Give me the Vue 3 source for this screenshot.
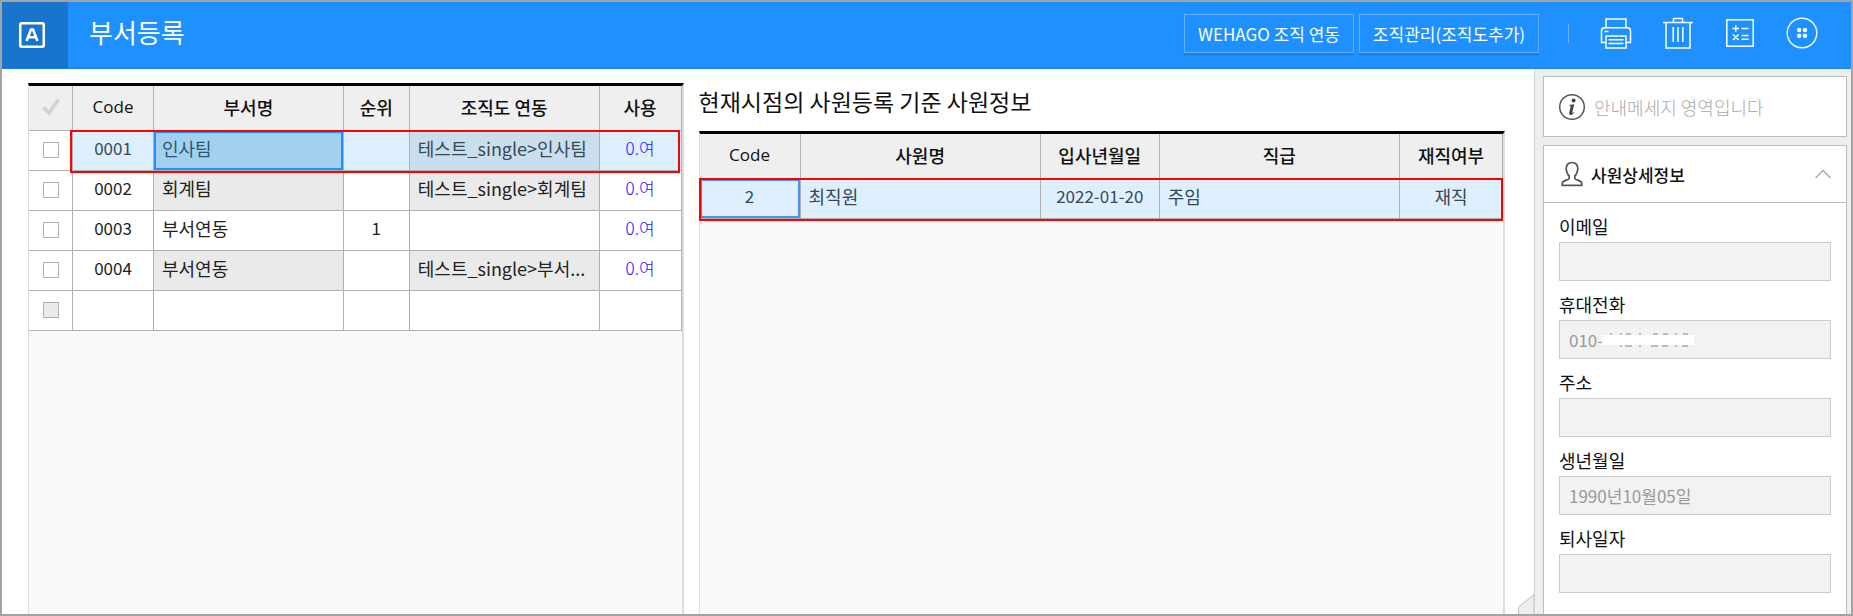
<template>
    <div class="app-frame">
        <header class="top-bar">
            <div class="logo-box">
                <svg class="logo-icon" viewBox="0 0 26 26" fill="none" stroke="#fff">
                    <rect x="1.25" y="1.25" width="23.5" height="23.5" rx="1.5" stroke-width="2.5" />
                    <path d="M7.5 19 L12 7.5 H14 L18.5 19 M9 15.3 H17" stroke-width="2.6" />
                </svg>
            </div>
            <h1 class="page-title">부서등록</h1>

            <div class="top-actions">
                <button type="button" class="text-button">WEHAGO 조직 연동</button>
                <button type="button" class="text-button wide">조직관리(조직도추가)</button>
            </div>
            <span class="divider"></span>
            <div class="icon-actions">
                <button type="button" class="icon-button" aria-label="인쇄">
                    <svg viewBox="0 0 32 32" fill="none" stroke="#fff" stroke-width="1.5">
                        <path d="M6 10.5 V2 H26 V10.5" />
                        <path d="M6 25.5 H1.5 V14 Q1.5 10.7 4.5 10.7 H27.5 Q30.5 10.7 30.5 14 V25.5 H26" />
                        <path d="M6 19 H26 V31 H6 Z M8.5 22.8 H23.5 M8.5 26.5 H23.5 M4.5 14.5 H8.5" />
                    </svg>
                </button>
                <button type="button" class="icon-button" aria-label="삭제">
                    <svg viewBox="0 0 32 32" fill="none" stroke="#fff" stroke-width="1.5">
                        <path d="M1 5.5 H31 M11.5 5 V1.5 H20.5 V5 M4 5.5 V31 H28 V5.5 M11.2 10 V25 M16 10 V25 M20.8 10 V25" />
                    </svg>
                </button>
                <button type="button" class="icon-button" aria-label="계산기">
                    <svg viewBox="0 0 32 32" fill="none" stroke="#fff" stroke-width="1.5">
                        <rect x="2.8" y="2.8" width="26.4" height="26.4" />
                        <path d="M8.5 11.5 H15 M11.8 8.2 V14.8 M17.5 11.5 H24.5 M9 17.5 L14.5 23 M14.5 17.5 L9 23 M17.5 18.5 H24.5 M17.5 22.3 H24.5" />
                    </svg>
                </button>
                <button type="button" class="icon-button" aria-label="더보기">
                    <svg viewBox="0 0 32 32" fill="none" stroke="#fff" stroke-width="1.4">
                        <circle cx="16" cy="16" r="14.8" />
                        <g fill="#fff" stroke="none">
                            <circle cx="13.2" cy="13" r="2.2" />
                            <circle cx="19" cy="13" r="2.2" />
                            <circle cx="13.2" cy="18.8" r="2.2" />
                            <circle cx="19" cy="18.8" r="2.2" />
                        </g>
                    </svg>
                </button>
            </div>
        </header>

        <div class="content">
            <main class="workspace">
                <section class="grid-pane dept-pane">
                    <table class="grid">
                        <colgroup>
                            <col class="col-check" />
                            <col class="col-code" />
                            <col />
                            <col class="col-order" />
                            <col />
                            <col class="col-use" />
                        </colgroup>
                        <thead>
                            <tr>
                                <th>
                                    <svg class="check-mark" viewBox="0 0 18 18" fill="none" stroke="#d0d0d0" stroke-width="3.4">
                                        <path d="M1.5 9.5 L7 15 L16.5 1.5" />
                                    </svg>
                                </th>
                                <th class="latin">Code</th>
                                <th>부서명</th>
                                <th>순위</th>
                                <th>조직도 연동</th>
                                <th>사용</th>
                            </tr>
                        </thead>
                        <tbody>
                            <tr v-for="(dept, index) in departments" :key="index" :class="{ selected: dept.selected }">
                                <td class="center">
                                    <input type="checkbox" class="row-check" :disabled="!dept.code" :aria-label="`${dept.code} 선택`" />
                                    <span v-if="dept.selected" class="row-mark"></span>
                                </td>
                                <td class="center latin">{{ dept.code }}</td>
                                <td :class="{ locked: dept.linked, focused: dept.selected }">{{ dept.name }}</td>
                                <td class="center latin">{{ dept.order }}</td>
                                <td :class="{ locked: dept.linked }">{{ dept.link }}</td>
                                <td class="center use">{{ dept.use }}</td>
                            </tr>
                        </tbody>
                    </table>
                </section>

                <section class="employee-area">
                    <h2 class="section-title">현재시점의 사원등록 기준 사원정보</h2>
                    <div class="grid-pane employee-pane">
                        <table class="grid">
                            <colgroup>
                                <col class="col-id" />
                                <col />
                                <col class="col-date" />
                                <col />
                                <col class="col-status" />
                            </colgroup>
                            <thead>
                                <tr>
                                    <th class="latin">Code</th>
                                    <th>사원명</th>
                                    <th>입사년월일</th>
                                    <th>직급</th>
                                    <th>재직여부</th>
                                </tr>
                            </thead>
                            <tbody>
                                <tr v-for="employee in employees" :key="employee.code" class="selected">
                                    <td class="center latin outlined">
                                        {{ employee.code }}
                                        <span class="row-mark"></span>
                                    </td>
                                    <td>{{ employee.name }}</td>
                                    <td class="center latin">{{ employee.joined }}</td>
                                    <td>{{ employee.rank }}</td>
                                    <td class="center">{{ employee.status }}</td>
                                </tr>
                            </tbody>
                        </table>
                    </div>
                </section>

                <svg class="corner-tab" viewBox="0 0 16 20" fill="#eee" stroke="#c0c0c0">
                    <path d="M0.5 21 V13 L16 0.5 V21" />
                </svg>
            </main>

            <aside class="side-panel">
                <div class="notice">
                    <svg class="info-icon" viewBox="0 0 28 28">
                        <circle cx="14" cy="14" r="12.3" fill="none" stroke="#555" stroke-width="1.5" />
                        <circle cx="15.6" cy="7.6" r="2" fill="#444" />
                        <path d="M10.8 12 L16.2 11.2 L14.2 19.5 Q14.1 20.8 16.8 18.6 Q15.2 22 12.4 22 Q10.7 21.8 11.2 19.6 L12.8 13.3 Z" fill="#444" />
                    </svg>
                    <span>안내메세지 영역입니다</span>
                </div>

                <section class="detail-card">
                    <button type="button" class="detail-header" @click="detailOpen = !detailOpen">
                        <svg class="user-icon" viewBox="0 0 22 26" fill="none" stroke="#555" stroke-width="1.7">
                            <path d="M11 1.5 C7 1.5 5 4.3 5.2 8 C5.4 11 6.5 13.5 8.2 15 V17.5 C7.5 19.5 1.2 19 1.2 22.5 V24.4 H20.8 V22.5 C20.8 19 14.5 19.5 13.8 17.5 V15 C15.5 13.5 16.6 11 16.8 8 C17 4.3 15 1.5 11 1.5 Z" />
                        </svg>
                        <span class="detail-title">사원상세정보</span>
                        <svg class="chevron" viewBox="0 0 16 10" fill="none" stroke="#aaa" stroke-width="1.5">
                            <path d="M0.5 9 L8 1.5 L15.5 9" />
                        </svg>
                    </button>
                    <div v-if="detailOpen" class="detail-body">
                        <div v-for="field in fields" :key="field.id" class="field">
                            <label :for="field.id">{{ field.label }}</label>
                            <div class="field-box">
                                <input :id="field.id" type="text" :value="field.value" readonly />
                                <svg v-if="field.masked" class="mask" viewBox="0 0 92 14">
                                    <rect x="0" y="2" width="92" height="10" fill="#fff" />
                                    <path d="M8 1 H10 M18 1 H20 M24 1 H29 M37 1 H39 M51 1 H56 M61 1 H66 M73 1 H75 M81 1 H86 M18 13 H20 M23 13 H30 M37 13 H39 M49 13 H56 M60 13 H66 M73 13 H75 M80 13 H86" stroke="#aaa" stroke-width="1.4" />
                                </svg>
                            </div>
                        </div>
                    </div>
                </section>
            </aside>
        </div>
    </div>
</template>

<script setup>
import { ref } from 'vue';

const detailOpen = ref(true);

const departments = [
    { code: '0001', name: '인사팀', order: '', link: '테스트_single>인사팀', use: '0.여', linked: true, selected: true },
    { code: '0002', name: '회계팀', order: '', link: '테스트_single>회계팀', use: '0.여', linked: true },
    { code: '0003', name: '부서연동', order: '1', link: '', use: '0.여', linked: false },
    { code: '0004', name: '부서연동', order: '', link: '테스트_single>부서...', use: '0.여', linked: true },
    { code: '', name: '', order: '', link: '', use: '', linked: false },
];

const employees = [
    { code: '2', name: '최직원', joined: '2022-01-20', rank: '주임', status: '재직' },
];

const fields = [
    { id: 'email', label: '이메일', value: '' },
    { id: 'mobile', label: '휴대전화', value: '010-', masked: true },
    { id: 'address', label: '주소', value: '' },
    { id: 'birth', label: '생년월일', value: '1990년10월05일' },
    { id: 'leave', label: '퇴사일자', value: '' },
];
</script>

<style>
body {
    margin: 0;
}
</style>

<style scoped>
.app-frame {
    box-sizing: border-box;
    display: flex;
    flex-direction: column;
    height: 100vh;
    border: 2px solid #a3a3a3;
    background: #fff;
    font-family: "Noto Sans CJK KR", "Noto Sans", sans-serif;
    font-size: 18px;
    color: #222;
    overflow: hidden;
}

.app-frame * {
    box-sizing: border-box;
}

button {
    font-family: inherit;
    cursor: pointer;
}

.top-bar {
    flex: none;
    display: flex;
    align-items: center;
    height: 67px;
    padding-right: 33px;
    padding-bottom: 4px;
    background: #1e90ff;
    border-bottom: 1px solid #1a80e4;
}

.logo-box {
    display: flex;
    align-items: center;
    align-self: flex-start;
    width: 66px;
    height: 66px;
    padding-left: 17px;
    background: #1874cd;
}

.logo-icon {
    width: 26px;
    height: 26px;
}

.page-title {
    flex: 1;
    margin: 0;
    padding-left: 21px;
    padding-bottom: 2px;
    font-size: 26px;
    line-height: 36px;
    font-weight: 400;
    color: #fff;
}

.top-actions {
    display: flex;
    gap: 5px;
}

.text-button {
    width: 170px;
    height: 39px;
    padding: 0;
    border: 1px solid #62b1ff;
    background: transparent;
    box-shadow: 0 2px 1px rgba(0, 60, 130, 0.2);
    color: #fff;
    font-size: 17px;
    font-weight: 400;
    white-space: nowrap;
}

.text-button.wide {
    width: 180px;
}

.divider {
    width: 1px;
    height: 19px;
    margin: 0 31px 0 29px;
    background: #69b5ff;
}

.icon-actions {
    display: flex;
    gap: 30px;
}

.icon-button {
    width: 32px;
    height: 32px;
    padding: 0;
    border: 0;
    background: transparent;
}

.icon-button svg {
    display: block;
    width: 32px;
    height: 32px;
}

.content {
    flex: 1;
    display: flex;
    min-height: 0;
}

.workspace {
    position: relative;
    flex: 1;
    display: flex;
    gap: 15px;
    min-width: 0;
    padding: 14px 29px 0 26px;
}

.grid-pane {
    background: #fafafa;
    border-top: 3px solid #000;
    border-left: 1px solid #ddd;
    border-right: 2px solid #ddd;
}

.dept-pane {
    flex: 653 1 0;
    min-width: 0;
}

.employee-area {
    flex: 807 1 0;
    display: flex;
    flex-direction: column;
    min-width: 0;
}

.section-title {
    margin: 0;
    height: 48px;
    font-size: 23px;
    line-height: 36px;
    font-weight: 400;
    color: #111;
    white-space: nowrap;
}

.employee-pane {
    flex: 1;
}

.grid {
    width: 100%;
    table-layout: fixed;
    border-collapse: separate;
    border-spacing: 0;
}

.grid th,
.grid td {
    padding: 0 8px;
    border-right: 1px solid #b0b0b0;
    border-bottom: 1px solid #b0b0b0;
    line-height: 26px;
    white-space: nowrap;
    overflow: hidden;
    text-overflow: ellipsis;
}

.grid th {
    height: 45px;
    padding: 0 0 3px;
    background: #efefef;
    font-weight: 500;
    color: #111;
}

.grid td {
    height: 40px;
    padding-bottom: 5px;
    background: #fff;
    font-weight: 400;
}

.grid .latin {
    font-size: 17px;
}

.grid th.latin {
    font-family: "Open Sans", sans-serif;
    font-weight: 500;
}

.grid td.center {
    padding-left: 0;
    padding-right: 0;
    text-align: center;
}

.grid td.locked {
    background: #eaeaea;
}

.grid td.use {
    color: #1414ff;
    font-size: 17px;
    font-weight: 300;
}

.grid tr.selected {
    position: relative;
}

.grid tr.selected td {
    background: #def0ff;
    color: #34495a;
}

.dept-pane tr.selected td:first-child {
    background: #fff;
}

.grid tr.selected td.locked {
    background: #cadeee;
}

.grid tr.selected td.focused {
    background: #a4d0f0;
    box-shadow: inset 0 0 0 2px #1e90ff;
    color: #2b5773;
}

.grid tr.selected td.use {
    color: #1414ff;
}

.grid tr.selected td.outlined {
    box-shadow: inset 0 0 0 2px #4c8ff0;
}

/* red frame around the active record */
.row-mark {
    position: absolute;
    inset: -1px 0 -2px -1px;
    border: 2px solid #f00;
    pointer-events: none;
}

.dept-pane .row-mark {
    left: 41px;
    right: 2px;
}

.col-check {
    width: 44px;
}

.col-code {
    width: 81px;
}

.col-order {
    width: 66px;
}

.col-use {
    width: 82px;
}

.col-id {
    width: 101px;
}

.col-date {
    width: 119px;
}

.col-status {
    width: 103px;
}

.check-mark {
    display: block;
    width: 18px;
    height: 18px;
    margin: 0 auto;
}

.row-check {
    appearance: none;
    display: block;
    width: 16px;
    height: 16px;
    margin: 4px auto 0;
    border: 1px solid #aab2c0;
    background: #fff;
}

.row-check:disabled {
    background: #ebebeb;
}

.corner-tab {
    position: absolute;
    right: 0;
    bottom: 0;
    width: 16px;
    height: 20px;
}

.side-panel {
    flex: none;
    display: flex;
    flex-direction: column;
    gap: 8px;
    width: 317px;
    padding: 7px 4px 0 8px;
    background: #eee;
    border-left: 1px solid #d0d0d0;
}

.notice {
    display: flex;
    align-items: center;
    gap: 8px;
    height: 61px;
    padding-left: 14px;
    border: 1px solid #bcbcbc;
    background: #fff;
    color: #aaa;
    font-weight: 300;
}

.info-icon {
    width: 28px;
    height: 28px;
}

.detail-card {
    flex: 1;
    border: 1px solid #bcbcbc;
    border-bottom: 0;
    background: #fff;
}

.detail-header {
    display: flex;
    align-items: center;
    width: 100%;
    height: 57px;
    padding: 0 15px 0 17px;
    border: 0;
    border-bottom: 1px solid #bcbcbc;
    background: transparent;
    font-size: 17px;
    font-weight: 500;
    color: #111;
    text-align: left;
}

.user-icon {
    width: 22px;
    height: 26px;
}

.detail-title {
    flex: 1;
    padding-left: 8px;
}

.chevron {
    width: 16px;
    height: 10px;
}

.detail-body {
    padding: 11px 15px 0;
}

.field {
    margin-bottom: 11px;
}

.field label {
    display: block;
    height: 28px;
    line-height: 24px;
    color: #111;
}

.field-box {
    position: relative;
}

.field input {
    display: block;
    width: 100%;
    height: 39px;
    padding: 0 9px;
    border: 1px solid #ccc;
    border-radius: 0;
    outline: none;
    background: #f2f2f2;
    color: #999;
    font-family: inherit;
    font-size: 17px;
}

.mask {
    position: absolute;
    left: 43px;
    top: 13px;
    width: 92px;
    height: 14px;
}
</style>
